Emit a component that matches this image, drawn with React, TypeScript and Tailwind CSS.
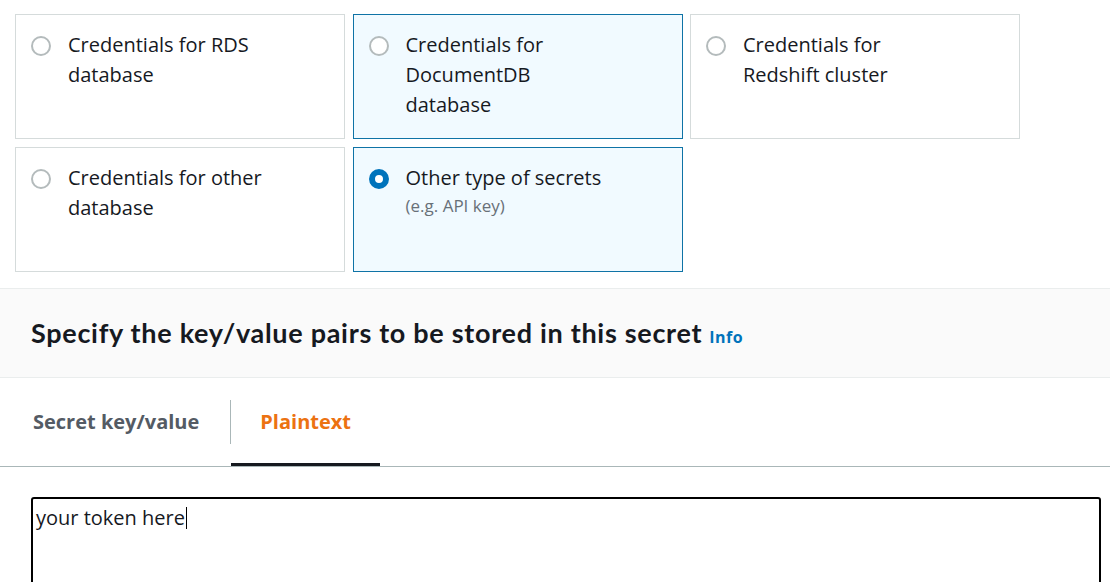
import React from 'react';

const body = { fontFamily: '"Open Sans", "Noto Sans", sans-serif' };
const heading = { fontFamily: 'Lato, "Open Sans", sans-serif' };

const Radio = ({ checked }: { checked: boolean }) =>
  checked ? (
    <span className="mt-[6px] block h-[20px] w-[20px] shrink-0 rounded-full border-[6px] border-[#0073bb] bg-white" />
  ) : (
    <span className="mt-[6px] block h-[20px] w-[20px] shrink-0 rounded-full border-2 border-[#b4bbbc] bg-white" />
  );

const Card = ({ lines, sub, checked, active }: { lines: string[]; sub?: string; checked?: boolean; active?: boolean }) => (
  <div
    className={
      'flex h-[125px] items-start gap-[17px] border pl-[15px] pt-[15px] ' +
      (active ? 'border-[#0f73a6] bg-[#f1faff]' : 'border-[#d5dbdb] bg-white')
    }
  >
    <Radio checked={!!checked} />
    <div>
      {lines.map((l) => (
        <div key={l} className="text-[20px] leading-[30px] text-[#16191f]">
          {l}
        </div>
      ))}
      {sub && <div className="mt-[2px] text-[17px] leading-[22px] text-[#687078]">{sub}</div>}
    </div>
  </div>
);

export default function App() {
  return (
    <div className="h-[582px] w-[1110px] overflow-hidden bg-white" style={body}>
      {/* secret type options */}
      <div className="grid grid-cols-[330px_330px_330px] gap-x-[7.5px] gap-y-[8px] pl-[15px] pt-[14px]">
        <Card lines={['Credentials for RDS', 'database']} />
        <Card lines={['Credentials for', 'DocumentDB', 'database']} active />
        <Card lines={['Credentials for', 'Redshift cluster']} />
        <Card lines={['Credentials for other', 'database']} />
        <Card lines={['Other type of secrets']} sub="(e.g. API key)" checked active />
      </div>

      {/* section header */}
      <div className="mt-[16px] flex h-[90px] items-center border-y border-[#eaeded] bg-[#fafafa] pl-[31px]">
        <h2 className="text-[27px] font-bold tracking-[0.7px] text-[#16191f]" style={heading}>
          Specify the key/value pairs to be stored in this secret
        </h2>
        <a className="ml-[7px] mt-[8px] text-[16px] font-bold tracking-[0.5px] text-[#0073bb]">Info</a>
      </div>

      {/* tabs */}
      <div className="flex h-[89px] border-b border-[#aab7b8]">
        <div className="flex items-center pl-[33px] pr-[31px] text-[20px] font-bold text-[#545b64]">Secret key/value</div>
        <div className="h-[44px] w-px self-center bg-[#aab7b8]" />
        <div className="flex items-center border-b-[3px] border-[#16191f] px-[29px] pt-[3px] text-[20px] font-bold text-[#ec7211]">
          Plaintext
        </div>
      </div>

      {/* plaintext editor */}
      <div className="ml-[31px] mt-[30px] h-[120px] w-[1070px] rounded-[3px] border-2 border-black pl-[3px] pt-[4px] text-[20px] leading-[26px] text-[#16191f]">
        your token here
        <span className="ml-px inline-block h-[22px] w-px translate-y-[4px] bg-black align-baseline" />
      </div>
    </div>
  );
}
